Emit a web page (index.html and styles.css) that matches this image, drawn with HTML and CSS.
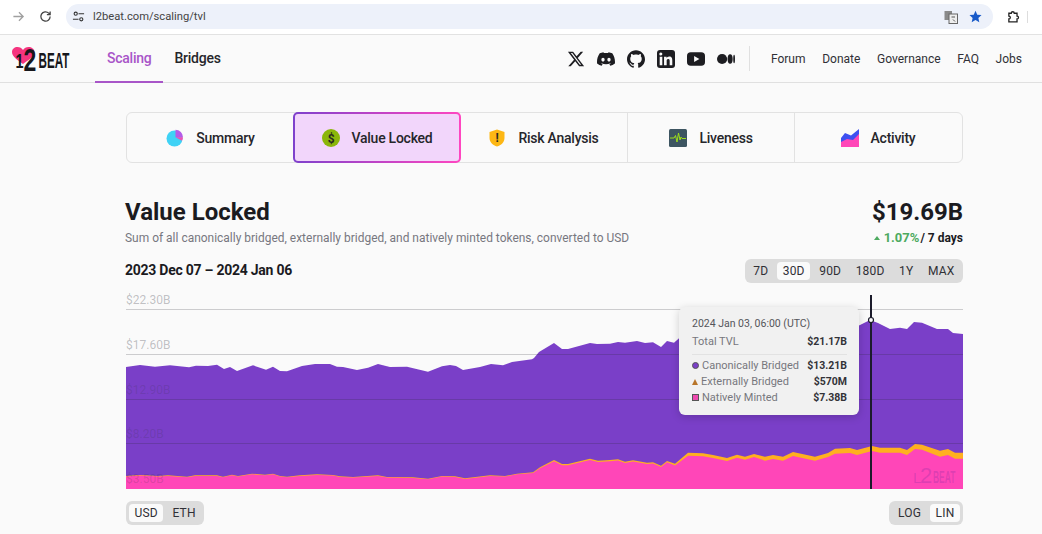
FILE: index.html
```html
<!DOCTYPE html>
<html lang="en">
<head>
    <meta charset="UTF-8">
    <title>Value Locked - L2BEAT</title>
    <link rel="stylesheet" href="styles.css">
</head>
<body>
    <div class="browser-bar">
        <svg class="browser-icon back" viewBox="0 0 14 14"><path d="M1.500 7h10.500M7.500 2.500 12 7l-4.500 4.500"/></svg>
        <svg class="browser-icon reload" viewBox="0 0 14 14"><path d="M12 7a5 5 0 1 1-1.500-3.600L12 5M12 1.500V5H8.500"/></svg>
        <div class="address">
            <svg class="tune" viewBox="0 0 14 14"><circle cx="4" cy="4" r="1.700"/><circle cx="10" cy="10" r="1.700"/><path d="M7 4h6M1 10h6"/></svg>
            <span class="url">l2beat.com/scaling/tvl</span>
            <svg class="translate" viewBox="0 0 14 14"><rect x="0.500" y="1" width="7.500" height="9" fill="#8a8a8a"/><rect x="5" y="4" width="8.500" height="9.500" fill="#eee" stroke="#666"/><path d="M7.500 7h3.500M9 9.500l2 2" stroke="#555" fill="none"/></svg>
            <svg class="star" viewBox="0 0 14 14"><path d="M7 .8 8.900 5l4.600.5-3.400 3.100 1 4.600L7 10.800l-4.100 2.400 1-4.600L.5 5.500 5.100 5z"/></svg>
        </div>
        <svg class="browser-icon puzzle" viewBox="0 0 14 14"><path d="M2 3.500h2.600a1.600 1.600 0 0 1 3.200 0h3v3a1.600 1.600 0 0 1 0 3.200v3H2v-3a1.600 1.600 0 0 0 0-3.200z"/></svg>
        <span class="bar-divider"></span>
    </div>

    <nav class="topnav">
        <svg class="logo" viewBox="0 0 58 25">
            <path d="M11 18C5.500 14 0 10.500 0 6 0 3 2.500 1 5.500 1c2.300 0 4.300 1 5.500 3 1.200-2 3.200-3 5.500-3C19.500 1 22.500 3 22.500 6c0 4.500-6 8-11.500 12z" fill="#f5347f"/>
            <text class="logo-num" transform="translate(3.500 21.500) scale(.72 1)">1<tspan class="logo-two" dy="3">2</tspan></text>
            <text class="logo-beat" transform="translate(26.500 22) scale(.53 1)">BEAT</text>
        </svg>
        <a class="nav-tab active">Scaling</a>
        <a class="nav-tab">Bridges</a>
        <div class="socials">
            <svg viewBox="0 0 24 24"><path d="M18.244 2.250h3.308l-7.227 8.260 8.502 11.240H16.170l-5.214-6.817L4.990 21.750H1.680l7.730-8.835L1.254 2.250H8.080l4.713 6.231zm-1.161 17.520h1.833L7.084 4.126H5.117z"/></svg>
            <svg viewBox="0 0 24 24"><path d="M20.317 4.370a19.790 19.790 0 0 0-4.885-1.515.074.074 0 0 0-.079.037c-.211.375-.445.865-.608 1.250a18.270 18.270 0 0 0-5.487 0 12.640 12.640 0 0 0-.618-1.250.077.077 0 0 0-.078-.037A19.740 19.740 0 0 0 3.677 4.370a.070.070 0 0 0-.032.028C.533 9.046-.319 13.580.099 18.058a.082.082 0 0 0 .031.056c2.053 1.508 4.041 2.423 5.993 3.030a.078.078 0 0 0 .084-.028c.462-.630.873-1.295 1.226-1.994a.076.076 0 0 0-.042-.106 13.100 13.100 0 0 1-1.872-.892.077.077 0 0 1-.008-.128c.126-.094.252-.192.372-.291a.074.074 0 0 1 .078-.011c3.928 1.793 8.180 1.793 12.061 0a.074.074 0 0 1 .079.010c.120.099.246.198.373.292a.077.077 0 0 1-.007.128 12.300 12.300 0 0 1-1.873.891.077.077 0 0 0-.041.107c.360.698.772 1.363 1.225 1.993a.076.076 0 0 0 .084.029c1.961-.607 3.950-1.522 6.002-3.030a.077.077 0 0 0 .031-.055c.500-5.177-.838-9.674-3.548-13.660a.061.061 0 0 0-.031-.029zM8.020 15.331c-1.183 0-2.157-1.086-2.157-2.419s.956-2.419 2.157-2.419c1.211 0 2.176 1.095 2.157 2.419 0 1.333-.956 2.419-2.157 2.419zm7.975 0c-1.183 0-2.157-1.086-2.157-2.419s.955-2.419 2.157-2.419c1.211 0 2.176 1.095 2.157 2.419 0 1.333-.946 2.419-2.157 2.419z"/></svg>
            <svg viewBox="0 0 24 24"><path d="M12 .297c-6.630 0-12 5.373-12 12 0 5.303 3.438 9.800 8.205 11.385.6.113.82-.258.82-.577 0-.285-.010-1.040-.015-2.040-3.338.724-4.042-1.610-4.042-1.610C4.422 18.070 3.633 17.700 3.633 17.700c-1.087-.744.084-.729.084-.729 1.205.084 1.838 1.236 1.838 1.236 1.070 1.835 2.809 1.305 3.495.998.108-.776.417-1.305.760-1.605-2.665-.3-5.466-1.332-5.466-5.930 0-1.310.465-2.380 1.235-3.220-.135-.303-.54-1.523.105-3.176 0 0 1.005-.322 3.300 1.230.96-.267 1.980-.399 3-.405 1.020.006 2.040.138 3 .405 2.280-1.552 3.285-1.230 3.285-1.230.645 1.653.24 2.873.12 3.176.765.84 1.230 1.910 1.230 3.220 0 4.610-2.805 5.625-5.475 5.920.42.36.81 1.096.81 2.220 0 1.606-.015 2.896-.015 3.286 0 .315.21.69.825.57C20.565 22.092 24 17.592 24 12.297c0-6.627-5.373-12-12-12"/></svg>
            <svg viewBox="0 0 24 24"><rect width="24" height="24" rx="4"/><path fill="#fafafa" d="M20.400 20.400h-3.500v-5.500c0-1.300 0-3-1.900-3s-2.100 1.400-2.100 2.900v5.600H9.400V9h3.400v1.600c.5-.9 1.600-1.900 3.400-1.900 3.600 0 4.200 2.400 4.200 5.500zM5.300 7.400a2.060 2.060 0 1 1 0-4.100 2.060 2.060 0 0 1 0 4.100zm1.800 13H3.600V9h3.500z"/></svg>
            <svg viewBox="0 0 24 24"><rect y="3" width="24" height="18" rx="5"/><path fill="#fafafa" d="M9.500 8v8l7-4z"/></svg>
            <svg viewBox="0 0 24 24"><circle cx="6.800" cy="12" r="6.800"/><ellipse cx="17.500" cy="12" rx="3.400" ry="6.300"/><ellipse cx="22.800" cy="12" rx="1.200" ry="5.600"/></svg>
        </div>
        <div class="nav-links">
            <a>Forum</a>
            <a>Donate</a>
            <a>Governance</a>
            <a>FAQ</a>
            <a>Jobs</a>
        </div>
    </nav>

    <main class="content">
        <div class="tabs">
            <a class="tab">
                <svg viewBox="0 0 18 18"><circle cx="8.500" cy="9.500" r="8" fill="#3fd2f5"/><path d="M9.500 .8a7.500 7.500 0 0 1 7.500 7.500H9.500z" fill="#b45be8"/><path d="M9.500 8.300H17a7.500 7.500 0 0 1-1 3.500z" fill="#f04fb4"/></svg>
                Summary
            </a>
            <a class="tab active">
                <svg viewBox="0 0 18 18"><circle cx="9" cy="9" r="9" fill="#8bb60a"/><text class="icon-glyph" x="9" y="13.500">$</text></svg>
                Value Locked
            </a>
            <a class="tab">
                <svg viewBox="0 0 18 18"><path d="M9 .5 16.500 3v6c0 4.500-3.500 7.200-7.500 8.500C5 16.200 1.500 13.500 1.500 9V3z" fill="#fdb714"/><text class="icon-glyph" x="9" y="13">!</text></svg>
                Risk Analysis
            </a>
            <a class="tab">
                <svg viewBox="0 0 18 18"><rect width="18" height="18" rx="1.500" fill="#3d5561"/><path d="M1 9h4l1.500-2.500L8 13l1.500-9L11 11l1-3 1 1.500h4" fill="none" stroke="#9fe01a" stroke-width="1"/></svg>
                Liveness
            </a>
            <a class="tab">
                <svg viewBox="0 0 18 18"><path d="M0 18V9l4-5 6 2.500L18 0v18z" fill="#3d50f0"/><path d="M0 18v-5l6-3 6 1 6-6v13z" fill="#ff46b8"/></svg>
                Activity
            </a>
        </div>

        <header class="heading">
            <div>
                <h1>Value Locked</h1>
                <p class="subtitle">Sum of all canonically bridged, externally bridged, and natively minted tokens, converted to USD</p>
            </div>
            <div class="total">
                <div class="total-value">$19.69B</div>
                <div class="total-change"><span class="up"><i class="arrow"></i>1.07%</span> / 7 days</div>
            </div>
        </header>

        <div class="range-row">
            <span class="range-date">2023 Dec 07 – 2024 Jan 06</span>
            <div class="switch">
                <a>7D</a><a class="on">30D</a><a>90D</a><a>180D</a><a>1Y</a><a>MAX</a>
            </div>
        </div>

        <div class="chart">
            <svg class="chart-svg" viewBox="125 292 838 198">
                <polygon fill="#7a3fc8" points="126,489 126,367 140,365 155,366.700 170,365.300 189,367.300 196,365.700 208,366 217,364.700 224,369 230,367 237,371 253,365.300 266,369.700 273,366.700 280,371 287,371.300 302,366 315,364 330,364 337,366.700 343,367 357,370 368,367.700 378,364 390,367 407,366.700 428,371.700 442,366.300 450,365 456,366 463,370 480,367 491,364 503,365.300 512,362 532,359.300 534,358 539,352 554,343 562,349 568,349 590,343 597,344 610,343.700 618,342 625,342.700 637,341 645,343 653,342.300 661,347 667,341 674,342.700 679,338.300 690,335 710,337 730,337 750,335 770,337 790,334 810,332 830,331 850,330 860,325 870,320 878,323 890,329 900,327.700 907,329 914,322 922,322.700 937,329 948,329 953,333 963,334 963,489"/>
                <polygon fill="#ffb01f" points="126,489 126,476 140,475 158,476 168,475.300 187,476.700 195,475.300 217,475.300 223,476.700 232,474.700 238,476 252,473.700 265,474.700 273,473.700 280,476 287,476.700 300,475.300 317,474.300 333,475 340,476.300 353,477 378,475.300 387,477 413,477.300 428,478.700 442,476 455,476.300 465,478.300 490,475.300 505,476 517,473.700 533,472.300 540,467.300 554,460 562,464 568,464 590,458.700 598,460.700 610,460 618,459.300 625,461.700 633,460.300 647,462.700 653,462.300 661,465.700 667,461 675,463.700 688,452.700 703,453.300 713,455 727,458 737,454.700 745,456.700 754,454 765,456.700 773,455 783,456.700 793,452 815,456.700 828,453 835,448.700 850,448 857,450 872,446 880,447.700 900,447.700 907,450 915,444 922,444.700 940,450.700 948,449 955,452.700 963,452.700 963,489"/>
                <polygon fill="#ff46b8" points="126,489 126,476.600 140,475.600 158,476.600 168,475.900 187,477.300 195,475.900 217,475.900 223,477.300 232,475.300 238,476.600 252,474.300 265,475.300 273,474.300 280,476.600 287,477.300 300,475.900 317,474.900 333,475.600 340,476.900 353,477.600 378,475.900 387,477.600 413,477.900 428,479.300 442,476.600 455,476.900 465,478.900 490,475.900 505,476.600 517,474.300 533,473.100 540,468.300 554,461.300 562,465.300 568,465.300 590,460 598,462 610,461.300 618,460.600 625,463 633,461.600 647,464 653,463.600 661,467 667,462.300 675,465.500 688,455.700 703,456.300 713,458 727,461 737,457.700 745,459.700 754,457 765,460.700 773,459 783,460.700 793,456 815,460.700 828,457 835,453.700 850,453 857,455 872,451 880,452.700 900,452.700 907,455 915,449 922,449.700 940,456.700 948,455 955,458.700 963,458.700 963,489"/>
                <g class="grid">
                    <line x1="126" y1="309.500" x2="963" y2="309.500"/>
                    <line x1="126" y1="354.500" x2="963" y2="354.500"/>
                    <line x1="126" y1="399.500" x2="963" y2="399.500"/>
                    <line x1="126" y1="443.500" x2="963" y2="443.500"/>
                </g>
                <g class="axis">
                    <text x="126" y="304">$22.30B</text>
                    <text x="126" y="349">$17.60B</text>
                </g>
                <g class="axis axis-faint">
                    <text x="126" y="393.500">$12.90B</text>
                    <text x="126" y="438">$8.20B</text>
                    <text x="126" y="483">$3.50B</text>
                </g>
                <text class="watermark-l" x="913" y="483">L</text>
                <text class="watermark-two" x="920" y="483">2</text>
                <text class="watermark-beat" transform="translate(933 482.500) scale(.53 1)">BEAT</text>
                <line class="cursor" x1="871" y1="295" x2="871" y2="489"/>
                <circle class="cursor-dot" cx="871" cy="320" r="2.500"/>
            </svg>
            <div class="tooltip">
                <div class="tip-date">2024 Jan 03, 06:00 (UTC)</div>
                <div class="tip-row tip-total"><span>Total TVL</span><b>$21.17B</b></div>
                <div class="tip-row"><span><i class="mark circle"></i>Canonically Bridged</span><b>$13.21B</b></div>
                <div class="tip-row"><span><i class="mark triangle"></i>Externally Bridged</span><b>$570M</b></div>
                <div class="tip-row"><span><i class="mark square"></i>Natively Minted</span><b>$7.38B</b></div>
            </div>
        </div>

        <div class="controls">
            <div class="switch">
                <a class="on">USD</a><a>ETH</a>
            </div>
            <div class="switch">
                <a>LOG</a><a class="on">LIN</a>
            </div>
        </div>
    </main>
</body>
</html>
```

FILE: styles.css
```css
html, body {
    height: 100%;
    overflow: hidden;
}

body {
    margin: 0;
    background-color: #fafafa;
    color: #1b1b1f;
    font-family: Roboto, Arial, sans-serif;
}

a {
    cursor: pointer;
}

/* browser chrome */
.browser-bar {
    display: flex;
    align-items: center;
    height: 33px;
    padding: 0 0 1px 12px;
    background-color: #fff;
    border-bottom: 1px solid #e2e2e2;
}

.browser-icon {
    width: 13px;
    height: 13px;
    fill: none;
    stroke: #444;
    stroke-width: 1.400;
}

.browser-icon.back {
    stroke: #a0a0a0;
}

.browser-icon.reload {
    margin-left: 14px;
}

.address {
    display: flex;
    align-items: center;
    width: 927px;
    height: 25px;
    margin-left: 14px;
    padding: 0 11px 0 6px;
    box-sizing: border-box;
    background-color: #edf1fa;
    border-radius: 13px;
}

.tune {
    width: 13px;
    height: 13px;
    fill: none;
    stroke: #333;
    stroke-width: 1.200;
}

.url {
    flex: 1;
    margin-left: 8px;
    font-size: 11.200px;
    color: #444;
}

.translate {
    width: 14px;
    height: 14px;
}

.star {
    width: 13px;
    height: 13px;
    margin-left: 11px;
    fill: #1a5bc9;
}

.browser-icon.puzzle {
    margin-left: 14px;
    stroke: #222;
}

.bar-divider {
    width: 1px;
    height: 12px;
    margin-left: 7px;
    background-color: #ddd;
}

/* site nav */
.topnav {
    display: flex;
    align-items: stretch;
    height: 47px;
    padding: 0 20px 0 12px;
    border-bottom: 1px solid #e0e0e0;
}

.logo {
    align-self: center;
    width: 58px;
    height: 25px;
    margin-right: 25px;
    overflow: visible;
}

.logo-num {
    font: 700 20px "Liberation Sans", sans-serif;
    fill: #17171b;
}

.logo-two {
    font-size: 32px;
}

.logo-beat {
    font: 700 22px "Liberation Sans", sans-serif;
    fill: #17171b;
}

.nav-tab {
    display: flex;
    align-items: center;
    padding: 0 12px;
    font-size: 14px;
    letter-spacing: -.25px;
    font-weight: 500;
    color: #26262b;
    border-bottom: 2px solid transparent;
    margin-bottom: -1px;
}

.nav-tab + .nav-tab {
    margin-left: -1px;
}

.nav-tab.active {
    color: #a855c8;
    border-bottom-color: #a855c8;
}

.socials {
    display: flex;
    align-items: center;
    gap: 12px;
    margin-left: auto;
}

.socials svg {
    width: 18px;
    height: 18px;
    fill: #1d1d21;
}

.nav-links {
    display: flex;
    align-items: center;
    gap: 16.700px;
    margin-left: 13.500px;
    padding-left: 21px;
    border-left: 1px solid #e0e0e0;
    height: 25px;
    align-self: center;
    font-size: 12px;
    color: #303036;
}

/* page content */
.content {
    padding: 29px 79px 0 125px;
}

.tabs {
    display: flex;
    height: 51px;
    margin-left: 1px;
    box-sizing: border-box;
    border: 1px solid #e2e2e2;
    border-radius: 6px;
}

.tab {
    width: 20%;
    box-sizing: border-box;
    display: flex;
    align-items: center;
    justify-content: center;
    gap: 12px;
    font-size: 14px;
    letter-spacing: -.25px;
    font-weight: 500;
    color: #26262b;
    border-left: 1px solid #e2e2e2;
}

.tab:first-child {
    border-left: none;
}

.tab svg {
    width: 18px;
    height: 18px;
}

.tab.active {
    width: calc(20% + 1px);
    margin: -1px 0 -1px -1px;
    border: 2px solid transparent;
    border-radius: 5px;
    background: linear-gradient(#f2d6fb, #f2d6fb) padding-box,
        linear-gradient(90deg, #7e41cc, #ff46c0) border-box;
}

.tab.active + .tab {
    margin-left: -1px;
    border-left: none;
}

.icon-glyph {
    font: 700 12px Roboto, sans-serif;
    fill: #2a2a20;
    text-anchor: middle;
}

.heading {
    display: flex;
    justify-content: space-between;
    margin-top: 35px;
}

h1 {
    margin: 0;
    font-size: 24px;
    line-height: 28px;
    font-weight: 700;
}

.subtitle {
    margin: 4px 0 0;
    font-size: 11.950px;
    letter-spacing: .01px;
    line-height: 16px;
    color: #77777f;
}

.total {
    text-align: right;
}

.total-value {
    font-size: 24px;
    line-height: 28px;
    font-weight: 700;
}

.total-change {
    margin-top: 4px;
    font-size: 12px;
    line-height: 16px;
    font-weight: 700;
}

.up {
    margin-right: -2px;
    color: #4daa5f;
    font-size: 13px;
}

.arrow {
    display: inline-block;
    margin-right: 4px;
    vertical-align: 2px;
    border: 3.500px solid transparent;
    border-top: none;
    border-bottom: 4px solid #4daa5f;
}

.range-row {
    display: flex;
    justify-content: space-between;
    align-items: center;
    margin-top: 13px;
}

.range-date {
    margin-bottom: 2px;
    font-size: 14px;
    letter-spacing: -.25px;
    font-weight: 700;
}

.switch {
    display: flex;
    gap: 3.500px;
    padding: 3px;
    background-color: #dcdcdc;
    border-radius: 6px;
    font-size: 12px;
    font-weight: 400;
    line-height: 18px;
    letter-spacing: .2px;
    color: #303036;
}

.switch a {
    padding: 0 5.500px;
    border-radius: 4px;
}

.switch a.on {
    background-color: #fafafa;
}

.chart {
    position: relative;
    margin-top: 9px;
}

.chart-svg {
    display: block;
    width: 838px;
    height: 198px;
}

.grid line {
    stroke: rgba(40, 40, 50, .22);
    stroke-width: 1;
}

.axis text {
    font: 400 12px Roboto, sans-serif;
    fill: rgba(50, 50, 60, .3);
}

.axis-faint text {
    fill: rgba(50, 50, 60, .18);
}

.watermark-l,
.watermark-two,
.watermark-beat {
    font-family: "Liberation Sans", sans-serif;
    fill: rgba(122, 40, 160, .25);
}

.watermark-l {
    font-size: 15px;
}

.watermark-two {
    font-size: 22px;
}

.watermark-beat {
    font-size: 16px;
    font-weight: 700;
}

.cursor {
    stroke: #1b1b2b;
    stroke-width: 2;
}

.cursor-dot {
    fill: #fafafa;
    stroke: #1b1b2b;
    stroke-width: 1.200;
}

.tooltip {
    position: absolute;
    left: 554px;
    top: 15px;
    width: 180px;
    height: 108px;
    box-sizing: border-box;
    padding: 9px 12px 8px 13px;
    background-color: #f1f1f1;
    border-radius: 6px;
    box-shadow: 0 2px 8px rgba(0, 0, 0, .18);
    font-size: 11px;
    line-height: 16px;
    color: #77777d;
    white-space: nowrap;
}

.tip-date {
    font-size: 10.500px;
    color: #55555b;
}

.tip-row {
    display: flex;
    justify-content: space-between;
}

.tip-row b {
    font-size: 10.500px;
    color: #333338;
    font-weight: 700;
}

.tip-total {
    margin-top: 2px;
    padding-bottom: 4px;
    margin-bottom: 3px;
    border-bottom: 1px solid #e2e2e2;
}

.mark {
    display: inline-block;
    width: 7px;
    height: 7px;
    margin-right: 3px;
    box-sizing: border-box;
    border: 1px solid #555;
}

.mark.circle {
    background-color: #7a3fc8;
    border-radius: 50%;
}

.mark.triangle {
    width: 0;
    height: 0;
    border: 3.500px solid transparent;
    border-top: none;
    border-bottom: 6px solid #b8752a;
}

.mark.square {
    background-color: #ee4bb0;
}

.controls {
    display: flex;
    justify-content: space-between;
    margin: 11px 0 0 1px;
}
```
